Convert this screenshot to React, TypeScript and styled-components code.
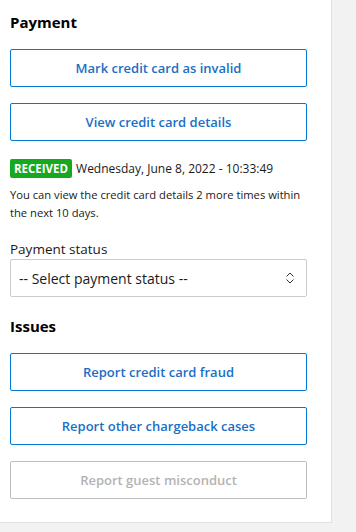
import React from "react";
import styled, { createGlobalStyle } from "styled-components";

const GlobalStyle = createGlobalStyle`
  body {
    margin: 0;
    background: #f2f2f2;
    font-family: "Open Sans", "Noto Sans", sans-serif;
  }
`;

const Panel = styled.div`
  width: 297px;
  padding: 12px 24px 7px 10px;
  background: #ffffff;
  border-right: 1px solid #e1e1e1;
  border-bottom: 1px solid #e1e1e1;
  display: flex;
  flex-direction: column;
`;

const SectionTitle = styled.h2`
  margin: 0 0 17px;
  font-size: 15px;
  line-height: 20px;
  font-weight: 700;
  color: #000;
`;

const ActionButton = styled.button<{ $disabled?: boolean }>`
  width: 100%;
  height: 38px;
  margin-bottom: 16px;
  background: #fff;
  border: 1px solid ${(p) => (p.$disabled ? "#bdbdbd" : "#0078d4")};
  border-radius: 2px;
  color: ${(p) => (p.$disabled ? "#b3b3b3" : "#1a6fc4")};
  font-family: inherit;
  font-size: 13px;
  font-weight: 600;
  cursor: ${(p) => (p.$disabled ? "not-allowed" : "pointer")};
`;

const StatusRow = styled.div`
  display: flex;
  align-items: center;
  gap: 4px;
  margin-top: 2px;
`;

const Badge = styled.span`
  background: #16a81e;
  color: #fff;
  font-size: 11.5px;
  font-weight: 700;
  height: 19px;
  line-height: 19px;
  padding: 0 4px;
  border-radius: 2px;
`;

const DateText = styled.span`
  font-size: 12px;
  color: #1a1a1a;
`;

const Note = styled.p`
  margin: 8px 0 18px;
  font-size: 11.2px;
  line-height: 18px;
  color: #1a1a1a;
`;

const Label = styled.label`
  font-size: 13.5px;
  color: #1a1a1a;
  line-height: 18px;
  margin-bottom: 1px;
`;

const SelectBox = styled.div`
  height: 38px;
  box-sizing: border-box;
  border: 1px solid #cccccc;
  border-radius: 2px;
  display: flex;
  align-items: center;
  justify-content: space-between;
  padding: 0 11px 0 8px;
  font-size: 14px;
  color: #1a1a1a;
  margin-bottom: 19px;
`;

const App: React.FC = () => {
  return (
    <>
      <GlobalStyle />
      <Panel>
        <SectionTitle>Payment</SectionTitle>
        <ActionButton>Mark credit card as invalid</ActionButton>
        <ActionButton>View credit card details</ActionButton>
        <StatusRow>
          <Badge>RECEIVED</Badge>
          <DateText>Wednesday, June 8, 2022 - 10:33:49</DateText>
        </StatusRow>
        <Note>
          You can view the credit card details 2 more times within the next 10
          days.
        </Note>
        <Label>Payment status</Label>
        <SelectBox>
          <span>-- Select payment status --</span>
          <svg width="10" height="12" viewBox="0 0 10 12" fill="none">
            <path
              d="M1.5 4.5 L5 1 L8.5 4.5 M1.5 7.5 L5 11 L8.5 7.5"
              stroke="#333"
              strokeWidth="1"
            />
          </svg>
        </SelectBox>
        <SectionTitle>Issues</SectionTitle>
        <ActionButton>Report credit card fraud</ActionButton>
        <ActionButton>Report other chargeback cases</ActionButton>
        <ActionButton $disabled disabled>
          Report guest misconduct
        </ActionButton>
      </Panel>
    </>
  );
};

export default App;
